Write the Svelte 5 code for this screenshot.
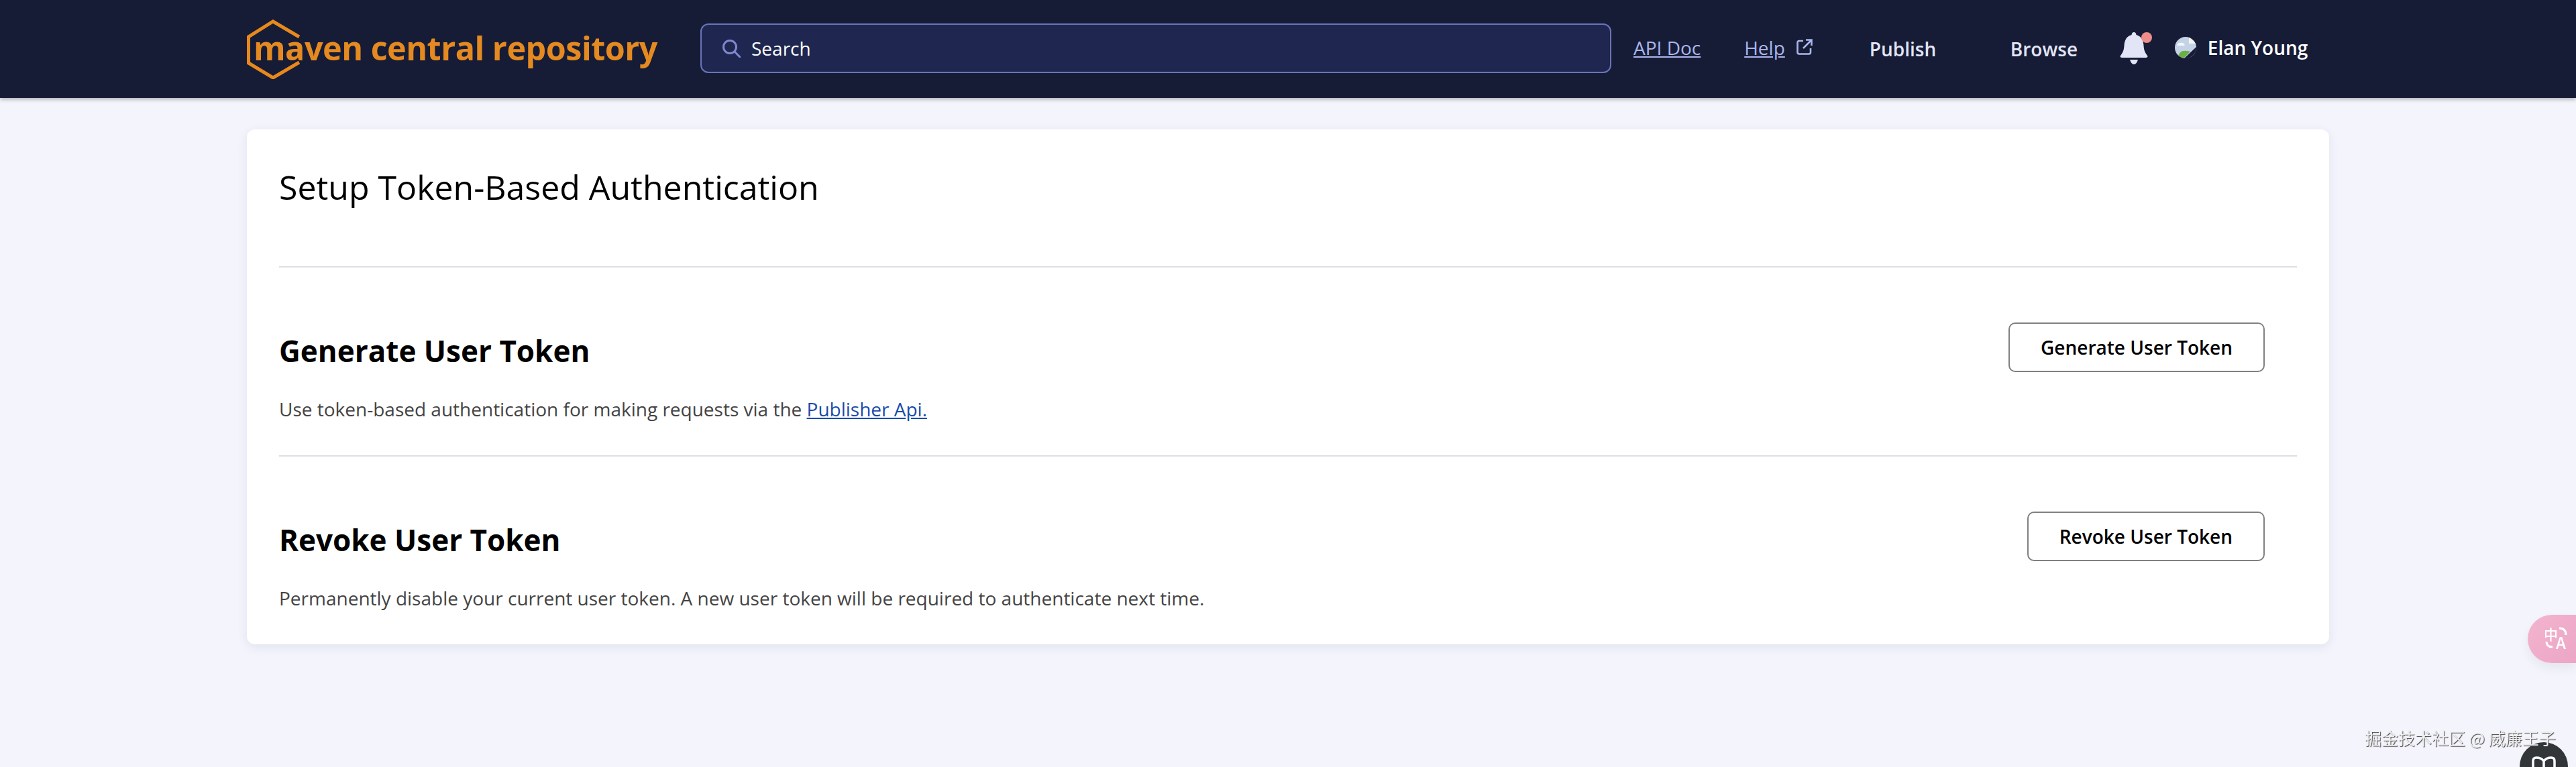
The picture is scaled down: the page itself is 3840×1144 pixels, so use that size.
<script>
	const navLinks = [
		{ label: 'Publish', width: 210 },
		{ label: 'Browse', width: 210 }
	];
	const sections = [
		{
			title: 'Generate User Token',
			text: 'Use token-based authentication for making requests via the ',
			link: 'Publisher Api.'
		},
		{
			title: 'Revoke User Token',
			text: 'Permanently disable your current user token. A new user token will be required to authenticate next time.'
		}
	];
</script>

<header>
	<a class="logo" href="#top">
		<svg class="hex" viewBox="0 0 80 90" width="80" height="90" aria-hidden="true">
			<path d="M78 27 L39 4 L2.5 27 V66 L39 88 L78 65" fill="none" stroke="#e8891c" stroke-width="5" />
		</svg>
		<span>maven central repository</span>
	</a>
	<div class="search">
		<svg viewBox="0 0 28 28" width="28" height="28" aria-hidden="true">
			<circle cx="12" cy="12" r="9.5" fill="none" stroke="#7f89d0" stroke-width="3" />
			<path d="M19 19 L27 27" stroke="#7f89d0" stroke-width="3" stroke-linecap="round" />
		</svg>
		<span>Search</span>
	</div>
	<a class="doc" href="#top">API Doc</a>
	<a class="doc help" href="#top">Help</a>
	<svg class="ext" viewBox="0 0 24 24" width="24" height="24" aria-hidden="true">
		<path d="M10 3 H4 Q1.5 3 1.5 5.5 V20 Q1.5 22.5 4 22.5 H18.5 Q21 22.5 21 20 V14" fill="none" stroke="#a9b6ec" stroke-width="2.6" />
		<path d="M10 14 L22 2 M14 1.5 H22.5 V10" fill="none" stroke="#a9b6ec" stroke-width="2.6" />
	</svg>
	<nav>
		{#each navLinks as link}
			<a href="#top" style="width: {link.width}px">{link.label}</a>
		{/each}
	</nav>
	<div class="bell">
		<svg viewBox="0 0 42 48" width="42" height="48" aria-hidden="true">
			<path d="M21 0 Q24 0 24.5 4 C32 6 35 12 35.5 20 C36 28 38 31 41 35 Q42.5 38 39 38 H3 Q-.5 38 1 35 C4 31 6 28 6.5 20 C7 12 10 6 17.5 4 Q18 0 21 0 Z" fill="#e2e5f6" />
			<path d="M15 41 H27 Q25 48 21 48 Q17 48 15 41 Z" fill="#e2e5f6" />
		</svg>
		<i></i>
	</div>
	<div class="user">
		<svg viewBox="0 0 32 32" width="32" height="32" aria-hidden="true">
			<defs><clipPath id="av"><circle cx="16" cy="16" r="16" /></clipPath></defs>
			<g clip-path="url(#av)">
				<rect width="32" height="32" fill="#c4d2e8" />
				<path d="M3 13 Q5 8 9 9 Q12 7 15 12 L14 13 Z" fill="#f4f7fc" />
				<path d="M21 0 L32 10 H21 Z" fill="#f2f6ef" />
				<path d="M4 32 Q6 22 12 21 Q18 20 23 22 L12 33 Z" fill="#6cb043" />
				<path d="M14 32 L32 15 V32 Z" fill="#171c36" />
				<path d="M22 32 L32 23 V27 L27 32 Z" fill="#8d96b0" />
			</g>
		</svg>
		<span>Elan Young</span>
	</div>
</header>

<main>
	<h1>Setup Token-Based Authentication</h1>
	{#each sections as section}
		<section>
			<div class="copy">
				<h2>{section.title}</h2>
				<p>{section.text}{#if section.link}<a href="#top">{section.link}</a>{/if}</p>
			</div>
			<button>{section.title}</button>
		</section>
	{/each}
</main>

<div class="translate">
	<span class="zh">中</span><span class="en">A</span>
	<svg viewBox="0 0 72 72" width="72" height="72" aria-hidden="true">
		<path d="M47 20 Q57 20 57 30 M28 40 Q28 48 37 48" fill="none" stroke="#fff" stroke-width="3" />
	</svg>
</div>
<div class="mark">掘金技术社区 @ 威廉王子</div>
<div class="book">
	<svg viewBox="0 0 36 36" width="36" height="36" aria-hidden="true">
		<path d="M18 8 Q14 3 7 3 Q2 3 2 8 V36 M18 8 Q22 3 29 3 Q34 3 34 8 V36 M18 8 V36" fill="none" stroke="#fff" stroke-width="3.5" />
	</svg>
</div>

<style>
	:global(body) {
		margin: 0;
		height: 1144px;
		overflow: hidden;
		background: #f3f4fc;
		font-family: 'Open Sans', sans-serif;
	}
	a {
		color: inherit;
	}
	header {
		display: flex;
		align-items: center;
		height: 146px;
		padding-left: 368px;
		box-sizing: border-box;
		background: #171c36;
		box-shadow: 0 2px 6px rgba(0, 0, 0, 0.3);
		color: #e2e5f6;
		font-size: 28px;
	}
	.logo {
		position: relative;
		display: flex;
		align-items: center;
		width: 676px;
		height: 90px;
		color: #e58a20;
		text-decoration: none;
	}
	.hex {
		flex: none;
	}
	.logo span {
		position: absolute;
		left: 10px;
		top: 8px;
		font-size: 48.5px;
		font-weight: 700;
		letter-spacing: -0.5px;
		line-height: 70px;
		white-space: nowrap;
	}
	.search {
		display: flex;
		align-items: center;
		gap: 16px;
		width: 1358px;
		height: 74px;
		margin-top: -2px;
		padding-left: 30px;
		box-sizing: border-box;
		border: 2px solid #6a74b8;
		border-radius: 12px;
		background: #1f2750;
		color: #fff;
	}
	.doc {
		margin-left: 33px;
		margin-top: -4px;
		color: #a9b6ec;
	}
	.help {
		margin-left: 65px;
	}
	.ext {
		margin-left: 17px;
		margin-top: -6px;
	}
	nav {
		display: flex;
		margin-left: 85px;
		font-weight: 600;
	}
	nav a {
		text-decoration: none;
	}
	.bell {
		position: relative;
		display: flex;
		margin-left: -47px;
		margin-top: -2px;
	}
	.bell i {
		position: absolute;
		right: -6px;
		top: 0;
		width: 16px;
		height: 16px;
		border-radius: 50%;
		background: #ef8d8a;
	}
	.user {
		display: flex;
		align-items: center;
		gap: 17px;
		margin-left: 40px;
		margin-top: -4px;
		color: #fff;
		font-weight: 600;
	}
	main {
		width: 3104px;
		height: 768px;
		margin: 47px auto 0;
		padding: 0 48px;
		box-sizing: border-box;
		border-radius: 12px;
		background: #fff;
		box-shadow: 0 4px 16px rgba(40, 50, 90, 0.09);
	}
	h1 {
		height: 204px;
		margin: 0;
		padding-top: 50px;
		box-sizing: border-box;
		color: #000;
		font-size: 50px;
		font-weight: 400;
		line-height: 72px;
	}
	section {
		display: flex;
		justify-content: space-between;
		align-items: flex-start;
		height: 282px;
		padding: 82px 48px 0 0;
		box-sizing: border-box;
		border-top: 2px solid #dedfe6;
	}
	h2 {
		margin: 12px 0 0;
		color: #000;
		font-size: 44px;
		font-weight: 700;
		line-height: 60px;
	}
	p {
		margin: 37px 0 0;
		color: #444;
		font-size: 28px;
		line-height: 40px;
	}
	p a {
		color: #1a4bab;
	}
	button {
		height: 74px;
		padding: 0 46px;
		border: 2px solid #808080;
		border-radius: 10px;
		background: #fff;
		color: #000;
		font: 600 28px 'Open Sans', sans-serif;
	}
	.translate {
		position: fixed;
		right: 0;
		top: 917px;
		width: 72px;
		height: 72px;
		border-radius: 36px 0 0 36px;
		background: linear-gradient(135deg, #f3b4cf, #eca6c6);
		box-shadow: 0 8px 16px rgba(0, 0, 0, 0.06);
		color: #fff;
		font-family: 'Noto Sans CJK SC', sans-serif;
		font-weight: 500;
	}
	.translate svg {
		position: absolute;
		left: 0;
		top: 0;
	}
	.zh {
		position: absolute;
		left: 24px;
		top: 15px;
		font-size: 21px;
		line-height: 26px;
	}
	.en {
		position: absolute;
		left: 42px;
		top: 27px;
		font-size: 24px;
		line-height: 28px;
	}
	.mark {
		position: fixed;
		left: 3525px;
		top: 1083px;
		color: #f0f0f0;
		font-family: 'Noto Sans CJK SC', sans-serif;
		font-size: 25px;
		line-height: 34px;
		white-space: nowrap;
		text-shadow: 1px 1px 1px #444;
		z-index: 1;
	}
	.book {
		position: fixed;
		left: 3756px;
		top: 1107px;
		display: flex;
		justify-content: center;
		width: 72px;
		height: 72px;
		padding-top: 20px;
		box-sizing: border-box;
		border-radius: 50%;
		background: #333639;
	}
</style>
